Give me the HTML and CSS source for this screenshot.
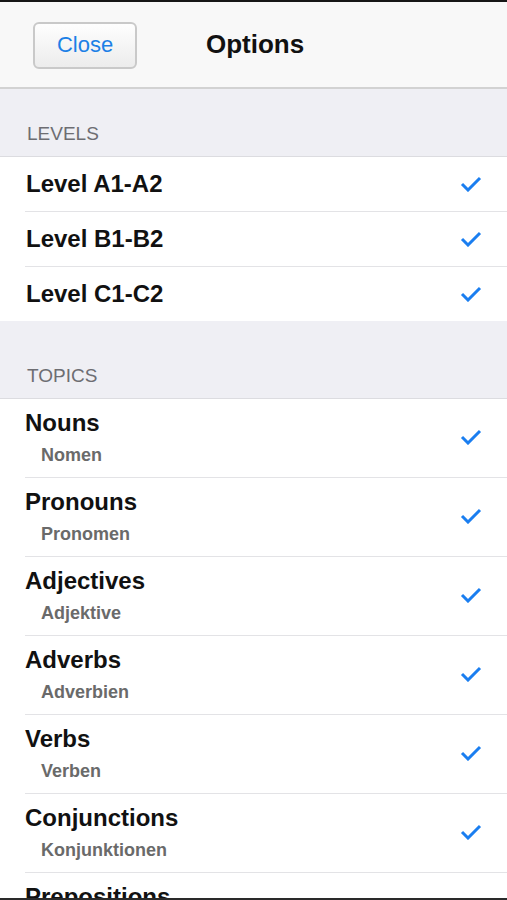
FILE: index.html
```html
<!DOCTYPE html>
<html lang="de">
<head>
    <meta charset="UTF-8">
    <meta name="viewport" content="width=device-width, initial-scale=1.0">
    <title>Options</title>
    <link rel="stylesheet" href="styles.css">
</head>
<body>
<div class="screen">
    <div class="navbar">
        <button class="close-btn">Close</button>
        <h1>Options</h1>
    </div>

    <div class="section-title first">LEVELS</div>
    <ul class="list">
        <li class="row level"><span class="label">Level A1-A2</span><svg class="check" viewBox="0 0 22 16"><path d="M2 8 L8 14 L20 2"/></svg></li>
        <li class="row level"><span class="label">Level B1-B2</span><svg class="check" viewBox="0 0 22 16"><path d="M2 8 L8 14 L20 2"/></svg></li>
        <li class="row level"><span class="label">Level C1-C2</span><svg class="check" viewBox="0 0 22 16"><path d="M2 8 L8 14 L20 2"/></svg></li>
    </ul>

    <div class="section-title">TOPICS</div>
    <ul class="list">
        <li class="row topic"><div><div class="label">Nouns</div><div class="sub">Nomen</div></div><svg class="check" viewBox="0 0 22 16"><path d="M2 8 L8 14 L20 2"/></svg></li>
        <li class="row topic"><div><div class="label">Pronouns</div><div class="sub">Pronomen</div></div><svg class="check" viewBox="0 0 22 16"><path d="M2 8 L8 14 L20 2"/></svg></li>
        <li class="row topic"><div><div class="label">Adjectives</div><div class="sub">Adjektive</div></div><svg class="check" viewBox="0 0 22 16"><path d="M2 8 L8 14 L20 2"/></svg></li>
        <li class="row topic"><div><div class="label">Adverbs</div><div class="sub">Adverbien</div></div><svg class="check" viewBox="0 0 22 16"><path d="M2 8 L8 14 L20 2"/></svg></li>
        <li class="row topic"><div><div class="label">Verbs</div><div class="sub">Verben</div></div><svg class="check" viewBox="0 0 22 16"><path d="M2 8 L8 14 L20 2"/></svg></li>
        <li class="row topic"><div><div class="label">Conjunctions</div><div class="sub">Konjunktionen</div></div><svg class="check" viewBox="0 0 22 16"><path d="M2 8 L8 14 L20 2"/></svg></li>
        <li class="row topic"><div><div class="label">Prepositions</div><div class="sub">Präpositionen</div></div><svg class="check" viewBox="0 0 22 16"><path d="M2 8 L8 14 L20 2"/></svg></li>
    </ul>
</div>
</body>
</html>
```

FILE: styles.css
```css
body {
    margin: 0;
    font-family: "Liberation Sans", Arial, sans-serif;
    background-color: #fff;
}
.screen {
    height: 900px;
    box-sizing: border-box;
    border-top: 2px solid #161616;
    border-bottom: 2px solid #2a2a2a;
    overflow: hidden;
}
.navbar {
    display: flex;
    align-items: center;
    box-sizing: border-box;
    height: 87px;
    padding-left: 33px;
    background-color: #f8f8f8;
    border-bottom: 2px solid #d2d2d2;
}
.close-btn {
    width: 104px;
    height: 47px;
    margin-top: 1px;
    font-family: inherit;
    font-size: 22px;
    color: #1c80e6;
    background: linear-gradient(#fefefe, #ececec);
    border: 2px solid #c9c9c9;
    border-radius: 6px;
}
h1 {
    margin: 0 0 0 69px;
    font-size: 26px;
    color: #111;
}
.section-title {
    background-color: #efeff4;
    color: #6d6d72;
    font-size: 19px;
    line-height: 22px;
    padding: 44px 27px 11px;
    border-bottom: 1px solid #dcdce0;
}
.section-title.first {
    padding-top: 34px;
}
.list {
    list-style: none;
    margin: 0;
    padding: 0 0 0 25px;
    background-color: #fff;
}
.row {
    display: flex;
    align-items: center;
    justify-content: space-between;
    padding-right: 25px;
    border-bottom: 1px solid #e3e3e6;
}
.row:last-child {
    border-bottom: none;
}
.level {
    height: 54px;
    padding-left: 1px;
}
.topic {
    height: 79px;
    align-items: flex-start;
    box-sizing: border-box;
    padding-top: 10px;
}
.label {
    font-size: 24px;
    line-height: 28px;
    font-weight: bold;
    color: #111;
}
.sub {
    margin-top: 7px;
    padding-left: 16px;
    font-size: 18px;
    line-height: 22px;
    font-weight: bold;
    color: #6a6a6a;
}
.check {
    width: 22px;
    height: 16px;
    fill: none;
    stroke: #1a7ef0;
    stroke-width: 3;
}
.topic .check {
    margin-top: 20px;
}
```
